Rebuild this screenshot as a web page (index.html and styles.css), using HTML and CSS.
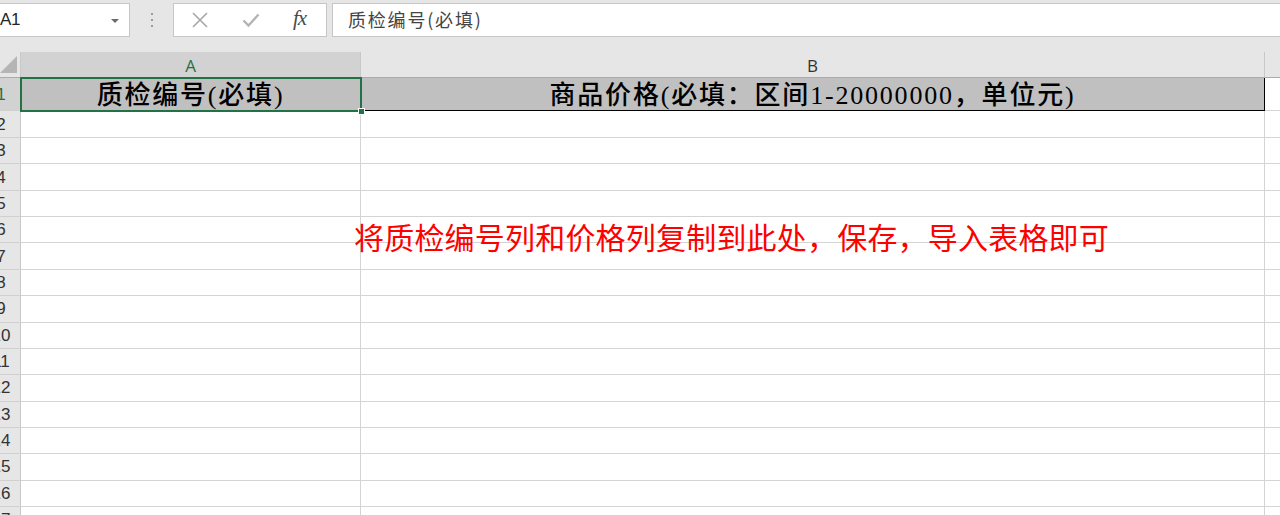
FILE: index.html
```html
<!DOCTYPE html>
<html lang="zh-CN">
<head>
<meta charset="utf-8">
<title>Sheet</title>
<link rel="stylesheet" href="styles.css">
</head>
<body>
<div class="app">
  <div class="toolbar">
    <div class="namebox">
      <span class="ref">A1</span>
      <svg class="caret" width="8" height="4" viewBox="0 0 8 4"><path d="M0 0H8L4 4Z" fill="#6a6a6a"/></svg>
    </div>
    <div class="dots"><i></i><i></i><i></i></div>
    <div class="fxbox">
      <svg class="ico" width="18" height="18" viewBox="0 0 18 18"><path d="M2 2L16 16M16 2L2 16" stroke="#a6a6a6" stroke-width="1.6" fill="none"/></svg>
      <svg class="ico" width="18" height="18" viewBox="0 0 18 18"><path d="M1.5 9.5L6.5 14.5L16.5 3.5" stroke="#b4b4b4" stroke-width="2.4" fill="none"/></svg>
      <span class="fx">fx</span>
    </div>
    <div class="formula">质检编号(必填)</div>
  </div>

  <div class="sheet">
    <div class="hrow">
      <div class="corner"><svg width="18" height="18" viewBox="0 0 18 18"><path d="M17 0V17H0Z" fill="#b5b5b5"/></svg></div>
      <div class="ch a sel">A</div>
      <div class="ch b">B</div>
      <div class="ch rest"></div>
    </div>

    <div class="row r1">
      <div class="rh sel"><span class="num">1</span></div>
      <div class="c a fill">质检编号(必填)</div>
      <div class="c b fill">商品价格(必填：区间1-20000000，单位元)</div>
      <div class="c rest"></div>
    </div>
    <div class="row r2"><div class="rh"><span class="num">2</span></div><div class="c a"></div><div class="c b"></div><div class="c rest"></div></div>
    <div class="row"><div class="rh"><span class="num">3</span></div><div class="c a"></div><div class="c b"></div><div class="c rest"></div></div>
    <div class="row"><div class="rh"><span class="num">4</span></div><div class="c a"></div><div class="c b"></div><div class="c rest"></div></div>
    <div class="row"><div class="rh"><span class="num">5</span></div><div class="c a"></div><div class="c b"></div><div class="c rest"></div></div>
    <div class="row"><div class="rh"><span class="num">6</span></div><div class="c a"></div><div class="c b"></div><div class="c rest"></div></div>
    <div class="row"><div class="rh"><span class="num">7</span></div><div class="c a"></div><div class="c b"></div><div class="c rest"></div></div>
    <div class="row"><div class="rh"><span class="num">8</span></div><div class="c a"></div><div class="c b"></div><div class="c rest"></div></div>
    <div class="row"><div class="rh"><span class="num">9</span></div><div class="c a"></div><div class="c b"></div><div class="c rest"></div></div>
    <div class="row"><div class="rh"><span class="num">10</span></div><div class="c a"></div><div class="c b"></div><div class="c rest"></div></div>
    <div class="row"><div class="rh"><span class="num">11</span></div><div class="c a"></div><div class="c b"></div><div class="c rest"></div></div>
    <div class="row"><div class="rh"><span class="num">12</span></div><div class="c a"></div><div class="c b"></div><div class="c rest"></div></div>
    <div class="row"><div class="rh"><span class="num">13</span></div><div class="c a"></div><div class="c b"></div><div class="c rest"></div></div>
    <div class="row"><div class="rh"><span class="num">14</span></div><div class="c a"></div><div class="c b"></div><div class="c rest"></div></div>
    <div class="row"><div class="rh"><span class="num">15</span></div><div class="c a"></div><div class="c b"></div><div class="c rest"></div></div>
    <div class="row"><div class="rh"><span class="num">16</span></div><div class="c a"></div><div class="c b"></div><div class="c rest"></div></div>
    <div class="row"><div class="rh"><span class="num">17</span></div><div class="c a"></div><div class="c b"></div><div class="c rest"></div></div>

    <div class="selection"><span class="handle"></span></div>
    <div class="note">将质检编号列和价格列复制到此处，保存，导入表格即可</div>
  </div>
</div>
</body>
</html>
```

FILE: styles.css
```css
* { box-sizing: border-box; }
html, body { margin: 0; padding: 0; }
body {
  width: 1280px;
  height: 515px;
  overflow: hidden;
  background: #ffffff;
  font-family: "Noto Sans CJK SC", "Liberation Sans", sans-serif;
}
.app { width: 1280px; height: 515px; overflow: hidden; }

/* ---------- toolbar ---------- */
.toolbar {
  height: 52px;
  background: #e6e6e6;
  display: flex;
  align-items: flex-start;
  padding-top: 3px;
}
.namebox {
  width: 131px;
  height: 34px;
  margin-left: -1px;
  background: #fff;
  border: 1px solid #c6c6c6;
  display: flex;
  align-items: center;
  justify-content: space-between;
  padding: 0 10px 0 0;
}
.ref {
  font-family: "Liberation Sans", sans-serif;
  font-size: 17px;
  color: #262626;
  letter-spacing: -0.3px;
}
.caret { margin-top: 1px; }
.dots {
  width: 43px;
  height: 34px;
  display: flex;
  flex-direction: column;
  align-items: center;
  justify-content: center;
  gap: 4px;
}
.dots i {
  display: block;
  width: 2px;
  height: 2px;
  background: #9a9a9a;
}
.fxbox {
  width: 154px;
  height: 34px;
  background: #fff;
  border: 1px solid #c6c6c6;
  display: flex;
  align-items: center;
  padding-left: 17px;
  gap: 33px;
}
.fx {
  font-family: "Liberation Serif", serif;
  font-style: italic;
  font-size: 21px;
  color: #4a4a4a;
  letter-spacing: -1px;
  line-height: 1;
  margin-top: -4px;
}
.formula {
  flex: 1;
  height: 34px;
  margin-left: 5px;
  background: #fff;
  border: 1px solid #c6c6c6;
  border-right: none;
  font-size: 18px;
  letter-spacing: 1.8px;
  color: #444;
  line-height: 31px;
  padding-left: 15px;
}

/* ---------- sheet ---------- */
.sheet { position: relative; }
.hrow { display: flex; height: 26px; background: #e6e6e6; }
.corner {
  width: 21px;
  height: 26px;
  border-right: 1px solid #c8c8c8;
  border-bottom: 1px solid #ababab;
  display: flex;
  align-items: flex-end;
  padding-bottom: 3px;
}
.ch {
  height: 26px;
  border-right: 1px solid #c8c8c8;
  border-bottom: 1px solid #ababab;
  text-align: center;
  font-family: "Open Sans", "Liberation Sans", sans-serif;
  font-size: 17px;
  line-height: 28px;
  color: #333;
}
.ch.sel { background: #d2d2d2; color: #217346; }
.a { width: 340px; flex: none; }
.b { width: 904px; flex: none; }
.rest { flex: 1; }
.ch.rest { border-right: none; }

.row { display: flex; height: 26.36px; }
.row.r1 { height: 33px; }
.row.r2 { height: 27px; }
.rh {
  width: 21px;
  flex: none;
  background: #e6e6e6;
  border-right: 1px solid #c8c8c8;
  border-bottom: 1px solid #d0d0d0;
  overflow: hidden;
  display: flex;
  align-items: center;
}
.rh.sel { background: #d2d2d2; }
.rh.sel .num { color: #217346; }
.num {
  flex: none;
  width: 40px;
  margin-left: -19px;
  text-align: center;
  font-family: "Liberation Sans", sans-serif;
  font-size: 17px;
  color: #333;
  line-height: 1;
}
.c {
  border-right: 1px solid #d4d4d4;
  border-bottom: 1px solid #d4d4d4;
}
.c.rest { border-right: none; }
.c.fill {
  background: #c0c0c0;
  border-bottom: 1px solid #000;
  text-align: center;
  font-family: "Liberation Serif", "Noto Sans CJK SC", serif;
  font-weight: 500;
  font-size: 26px;
  letter-spacing: 1.8px;
  padding-top: 3px;
  line-height: 30px;
  color: #000;
  white-space: nowrap;
}
.c.b.fill { border-right: 1px solid #000; }

.selection {
  position: absolute;
  left: 20px;
  top: 25px;
  width: 342px;
  height: 35px;
  border: 2px solid #217346;
  pointer-events: none;
}
.handle {
  position: absolute;
  right: -5px;
  bottom: -5px;
  width: 7px;
  height: 7px;
  background: #217346;
  border: 1px solid #fff;
}
.note {
  position: absolute;
  left: 354px;
  top: 166px;
  font-family: "Noto Sans CJK SC", sans-serif;
  font-size: 30px;
  letter-spacing: 0.2px;
  line-height: 36px;
  color: #ff0000;
  white-space: nowrap;
}
```
